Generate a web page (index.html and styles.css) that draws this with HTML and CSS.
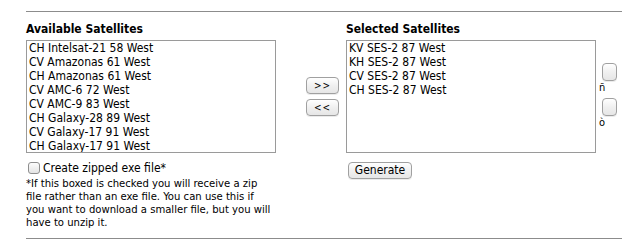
FILE: index.html
```html
<!DOCTYPE html>
<html>
<head>
<meta charset="utf-8">
<link rel="stylesheet" href="styles.css">
</head>
<body>
<div class="page">
  <div class="rule"></div>
  <div class="form">
    <div class="col">
      <div class="heading">Available Satellites</div>
      <div class="listbox">
        <div class="item">CH Intelsat-21 58 West</div>
        <div class="item">CV Amazonas 61 West</div>
        <div class="item">CH Amazonas 61 West</div>
        <div class="item">CV AMC-6 72 West</div>
        <div class="item">CV AMC-9 83 West</div>
        <div class="item">CH Galaxy-28 89 West</div>
        <div class="item">CV Galaxy-17 91 West</div>
        <div class="item">CH Galaxy-17 91 West</div>
      </div>
      <label class="check"><span class="box"></span>Create zipped exe file*</label>
      <p class="note">*If this boxed is checked you will receive a zip<br>file rather than an exe file. You can use this if<br>you want to download a smaller file, but you will<br>have to unzip it.</p>
    </div>
    <div class="mover">
      <button class="btn move">&gt;&gt;</button>
      <button class="btn move">&lt;&lt;</button>
    </div>
    <div class="col">
      <div class="heading">Selected Satellites</div>
      <div class="selrow">
        <div class="listbox">
          <div class="item">KV SES-2 87 West</div>
          <div class="item">KH SES-2 87 West</div>
          <div class="item">CV SES-2 87 West</div>
          <div class="item">CH SES-2 87 West</div>
        </div>
        <div class="order">
          <button class="btn tiny"></button>
          <span class="glyph">ñ</span>
          <button class="btn tiny"></button>
          <span class="glyph">ò</span>
        </div>
      </div>
      <button class="btn generate">Generate</button>
    </div>
  </div>
  <div class="rule bottom"></div>
</div>
</body>
</html>
```
FILE: styles.css
```css
html, body {
  margin: 0;
  padding: 0;
  background: #fff;
}
body {
  font-family: "DejaVu Sans Condensed", "DejaVu Sans", sans-serif;
  font-stretch: condensed;
  font-size: 12px;
  color: #000;
}
.page {
  width: 596px;
  margin-left: 26px;
  padding-top: 11px;
}
.rule {
  border-top: 1px solid #8c8c8c;
  height: 0;
}
.form {
  display: flex;
  align-items: flex-start;
  height: 226px;
}
.col {
  display: flex;
  flex-direction: column;
}
.heading {
  font-weight: bold;
  line-height: 14px;
  margin-top: 10px;
  margin-bottom: 4px;
}
.listbox {
  width: 248px;
  height: 111px;
  border: 1px solid #9a9a9a;
  overflow: hidden;
}
.item {
  line-height: 14px;
  height: 14px;
  padding-left: 2px;
  white-space: nowrap;
}
.check {
  display: flex;
  align-items: center;
  margin-top: 8px;
  line-height: 14px;
  height: 14px;
}
.box {
  width: 10px;
  height: 10px;
  border: 1px solid #8e8e8e;
  border-radius: 3px;
  background: linear-gradient(#fcfcfc, #e4e4e4);
  margin-left: 2px;
  margin-right: 3px;
}
.note {
  margin: 2px 0 0;
  font-size: 11.2px;
  line-height: 13px;
  white-space: nowrap;
}
.btn {
  font-family: inherit;
  font-stretch: condensed;
  font-size: 12px;
  color: #000;
  border: 1px solid #a0a0a0;
  border-radius: 4px;
  background: linear-gradient(#ffffff, #f0f0f0 50%, #e6e6e6);
  padding: 0;
  margin: 0;
  box-shadow: 0 1px 0 rgba(0,0,0,0.08);
}
.mover {
  display: flex;
  flex-direction: column;
  gap: 5px;
  margin-left: 30px;
  margin-right: 7px;
  padding-top: 65px;
}
.move {
  width: 33px;
  height: 17px;
  font-size: 10px;
  line-height: 15px;
  letter-spacing: 1px;
}
.selrow {
  display: flex;
  align-items: flex-start;
}
.order {
  display: flex;
  flex-direction: column;
  align-items: flex-start;
  margin-left: 3px;
  padding-top: 23px;
}
.tiny {
  width: 15px;
  height: 18px;
  margin-left: 3px;
}
.glyph {
  font-size: 11px;
  line-height: 14px;
  margin-bottom: 3px;
}
.generate {
  width: 64px;
  height: 17px;
  line-height: 15px;
  margin-top: 9px;
  margin-left: 2px;
}
```
